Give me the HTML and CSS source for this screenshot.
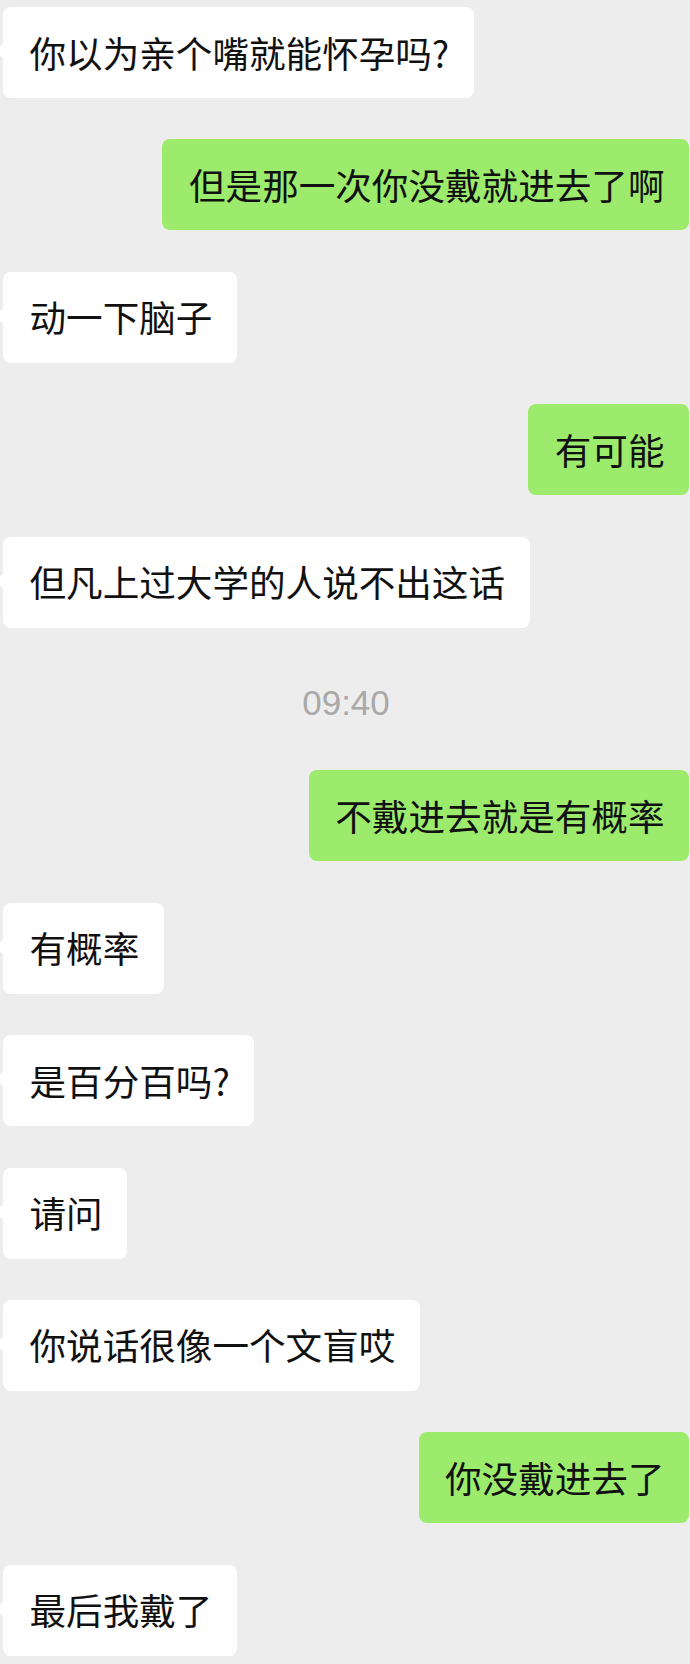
FILE: index.html
```html
<!DOCTYPE html>
<html lang="zh-CN">
<head>
  <meta charset="UTF-8">
  <meta name="viewport" content="width=device-width, initial-scale=1.0">
  <title>聊天记录</title>
  <link rel="stylesheet" href="styles.css">
</head>
<body>
  <div id="chat">
    <div class="msg in">你以为亲个嘴就能怀孕吗?</div>
    <div class="msg out">但是那一次你没戴就进去了啊</div>
    <div class="msg in">动一下脑子</div>
    <div class="msg out">有可能</div>
    <div class="msg in">但凡上过大学的人说不出这话</div>
    <div class="time">09:40</div>
    <div class="msg out">不戴进去就是有概率</div>
    <div class="msg in">有概率</div>
    <div class="msg in">是百分百吗?</div>
    <div class="msg in">请问</div>
    <div class="msg in">你说话很像一个文盲哎</div>
    <div class="msg out">你没戴进去了</div>
    <div class="msg in">最后我戴了</div>
  </div>
</body>
</html>
```

FILE: styles.css
```css
html, body {
  margin: 0;
  padding: 0;
  background-color: #ededed;
  font-family: "Noto Sans CJK SC", sans-serif;
}

#chat {
  display: flex;
  flex-direction: column;
  gap: 41.4px;
  padding: 7px 1px 20px 3px;
}

.msg {
  position: relative;
  max-width: 560px;
  padding: 20.5px 24.5px 20.5px 26.5px;
  font-size: 36.6px;
  line-height: 50px;
  color: #111;
  border-radius: 8px;
  white-space: nowrap;
}

.msg.in {
  align-self: flex-start;
  background-color: #fff;
}

.msg.in::before {
  content: "";
  position: absolute;
  left: -8px;
  top: 36px;
  border-style: solid;
  border-width: 8px 9px 8px 0;
  border-color: transparent #fff transparent transparent;
}

.msg.out {
  align-self: flex-end;
  background-color: #9ceb6c;
}

.time {
  align-self: center;
  padding-top: 8px;
  line-height: 52px;
  font-family: "Liberation Sans", sans-serif;
  font-size: 35px;
  color: #a9a9a9;
}
```
